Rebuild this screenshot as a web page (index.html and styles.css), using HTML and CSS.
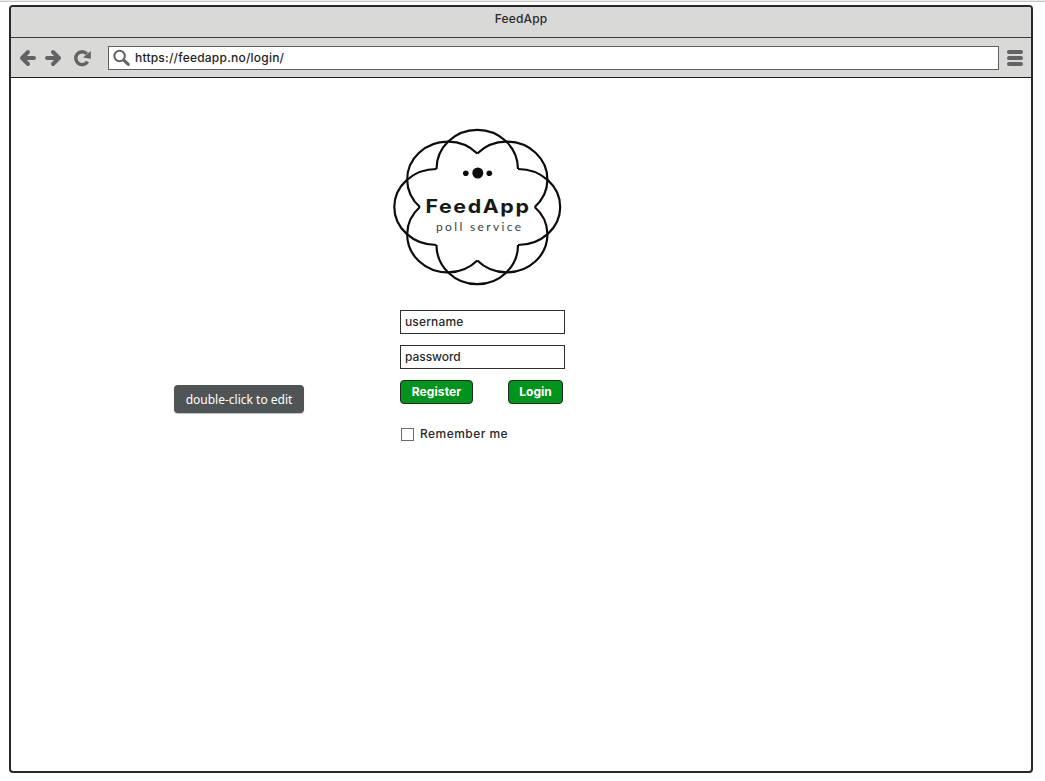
FILE: index.html
```html
<!DOCTYPE html>
<html lang="en">
<head>
<meta charset="utf-8">
<title>FeedApp</title>
<link rel="stylesheet" href="styles.css">
</head>
<body>
<div class="window">
  <header class="titlebar"><span class="title">FeedApp</span></header>
  <nav class="toolbar">
    <svg class="nav-icons" width="97" height="38" viewBox="11 39 97 38">
      <g fill="none" stroke="#636363" stroke-width="4" stroke-linecap="round" stroke-linejoin="round">
        <path d="M34 58H23M28 52l-6 6 6 6"/>
        <path d="M47 58h11M53 52l6 6-6 6"/>
        <path d="M87.6 61.6A6.4 6.4 0 1 1 86.8 53.8" stroke-width="3.4" stroke-linecap="butt"/>
      </g>
      <path d="M90.8 51V58.8L83 57.6z" fill="#636363"/>
    </svg>
    <div class="address">
      <svg class="search" width="20" height="20" viewBox="112 48 20 20" fill="none" stroke="#636363">
        <circle cx="119.6" cy="56" r="5.2" stroke-width="2"/>
        <path d="M124 60.4l4.3 4" stroke-width="3" stroke-linecap="round"/>
      </svg>
      <span class="url">https://feedapp.no/login/</span>
    </div>
    <div class="menu"><i></i><i></i><i></i></div>
  </nav>
  <main class="page">
    <svg class="logo" width="172" height="160" viewBox="391 127 172 160">
      <g fill="none" stroke="#0b0d0e" stroke-width="2.2" stroke-linejoin="miter">
        <path d="M436.5 169A40.75 39.2 0 0 1 518 169"/>
        <path d="M477.3 153.5A40.6 37.85 0 1 1 534.7 207"/>
        <path d="M518 169A42.2 38 0 0 1 518 245"/>
        <path d="M534.7 207A40.6 37.85 0 1 1 477.3 260.5"/>
        <path d="M518 245A40.75 39.2 0 0 1 436.5 245"/>
        <path d="M477.3 260.5A40.6 37.85 0 1 1 419.9 207"/>
        <path d="M436.5 245A42.2 38 0 0 1 436.5 169"/>
        <path d="M419.9 207A40.6 37.85 0 1 1 477.3 153.5"/>
      </g>
      <g fill="#0b0d0e">
        <circle cx="465.8" cy="173.3" r="2.8"/>
        <circle cx="477.8" cy="173" r="5.5"/>
        <circle cx="489.3" cy="173.3" r="2.8"/>
      </g>
      <text class="brand" x="425.5" y="212.9" textLength="105" lengthAdjust="spacingAndGlyphs">FeedApp</text>
      <text class="tagline" x="436" y="230.6" textLength="85">poll service</text>
    </svg>
    <form class="login">
      <div class="field"><span class="t-user">username</span></div>
      <div class="field"><span class="t-pass">password</span></div>
      <div class="actions">
        <button type="button" class="btn register">Register</button>
        <button type="button" class="btn signin">Login</button>
      </div>
      <label class="remember"><span class="box"></span><span class="t-rem">Remember me</span></label>
    </form>
    <div class="tooltip">double-click to edit</div>
  </main>
</div>
</body>
</html>
```
FILE: styles.css
```css
* { box-sizing: border-box; }
body {
  margin: 0;
  height: 781px;
  padding: 4px 12px 8px 9px;
  overflow: hidden;
  background: linear-gradient(#ebebeb 1px, #c6c6c6 1px, #c6c6c6 2px, #fff 2px);
  font: 500 12px/16px Inter, sans-serif;
  color: #2a2a2b;
}
.window {
  margin-top: 1px;
  height: 768px;
  border: 2px solid #272829;
  border-radius: 4px;
  overflow: hidden;
  background: #fff;
}
.titlebar {
  height: 31px;
  padding-top: 4px;
  background: #d9d9d7;
  border-bottom: 1px solid #3c3c3c;
  text-align: center;
  letter-spacing: .15px;
}
.toolbar {
  display: flex;
  align-items: center;
  height: 40px;
  background: #d9d9d7;
  border-bottom: 1px solid #1e1e1e;
}
.nav-icons { flex: none; }
.address {
  display: flex;
  align-items: center;
  width: 891px;
  height: 24px;
  margin-top: 1px;
  padding-left: 3px;
  border: 1px solid #5e5e5e;
  background: #fff;
}
.url { margin-left: 3px; color: #1e1e1e; letter-spacing: .22px; }
.menu {
  display: flex;
  flex-direction: column;
  gap: 2px;
  margin: 1px 0 0 8px;
}
.menu i { width: 16px; height: 4px; border-radius: 2px; background: #636363; }
.page { position: relative; height: 693px; padding: 49px 0 0 380px; }
.logo { display: block; }
.brand { font: 700 18.5px Inter, sans-serif; letter-spacing: 1.4px; fill: #15191a; }
.tagline { font: 400 12px Lato, sans-serif; fill: #3a3e40; }
.login { width: 165px; margin: 23px 0 0 9px; }
.field {
  height: 24px;
  margin-bottom: 11px;
  padding: 3px 4px;
  border: 1px solid #2d2d2e;
}
.t-user { letter-spacing: .15px; }
.t-pass { letter-spacing: -.05px; }
.t-rem { letter-spacing: .45px; }
.actions { display: flex; justify-content: space-between; padding-right: 2px; }
.btn {
  height: 24px;
  padding: 0 0 1px;
  border: 1px solid #1d2b20;
  border-radius: 4px;
  background: #00931d;
  color: #fff;
  font: 700 12px/16px Inter, sans-serif;
}
.register { width: 73px; letter-spacing: .1px; }
.signin { width: 55px; letter-spacing: 0; }
.remember { display: flex; align-items: center; height: 16px; margin: 22px 0 0 1px; }
.box { width: 13px; height: 13px; margin-right: 6px; border: 1px solid #6b6b6b; }
.tooltip {
  position: absolute;
  left: 163px;
  top: 307px;
  width: 130px;
  height: 28px;
  border-radius: 4px;
  background: #4f5457;
  box-shadow: 0 1px 1px rgba(0, 0, 0, .25);
  color: #fff;
  font: 12px/30px "Noto Sans", sans-serif;
  text-align: center;
}
```
